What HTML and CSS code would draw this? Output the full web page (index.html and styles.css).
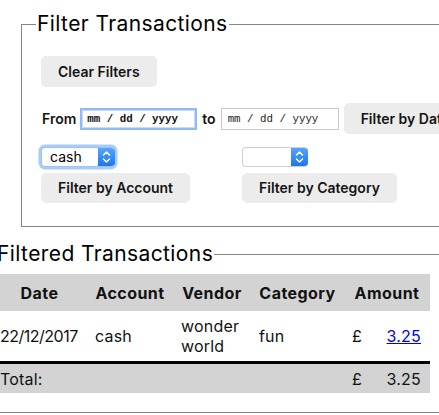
FILE: index.html
```html
<!DOCTYPE html>
<html>
<head>
<meta charset="utf-8">
<title>Transactions</title>
<link rel="stylesheet" href="styles.css">
</head>
<body>
<fieldset class="panel filters">
  <legend class="panel-title">Filter Transactions</legend>
  <div class="row">
    <button class="btn">Clear Filters</button>
  </div>
  <div class="row date-row">
    <span class="label">From</span>
    <input class="date date-focused" type="text" value="mm / dd / yyyy" readonly>
    <span class="label">to</span>
    <input class="date" type="text" value="mm / dd / yyyy" readonly>
    <button class="btn">Filter by Date</button>
  </div>
  <div class="select-grid">
    <div class="select-col">
      <div class="select select-focused">
        <span class="select-value">cash</span>
        <span class="select-arrow"><svg width="17" height="20" viewBox="0 0 17 20"><path d="M5.5 8 L8.5 5 L11.5 8" fill="none" stroke="#fff" stroke-width="1.5" stroke-linecap="round" stroke-linejoin="round"/><path d="M5.5 12 L8.5 15 L11.5 12" fill="none" stroke="#fff" stroke-width="1.5" stroke-linecap="round" stroke-linejoin="round"/></svg></span>
      </div>
      <button class="btn btn-short">Filter by Account</button>
    </div>
    <div class="select-col">
      <div class="select select-empty">
        <span class="select-value"></span>
        <span class="select-arrow"><svg width="17" height="20" viewBox="0 0 17 20"><path d="M5.5 8 L8.5 5 L11.5 8" fill="none" stroke="#fff" stroke-width="1.5" stroke-linecap="round" stroke-linejoin="round"/><path d="M5.5 12 L8.5 15 L11.5 12" fill="none" stroke="#fff" stroke-width="1.5" stroke-linecap="round" stroke-linejoin="round"/></svg></span>
      </div>
      <button class="btn btn-short">Filter by Category</button>
    </div>
  </div>
</fieldset>

<fieldset class="panel results">
  <legend class="panel-title">Filtered Transactions</legend>
  <table class="tx">
    <colgroup>
      <col class="c-date"><col class="c-acc"><col class="c-ven"><col class="c-cat"><col class="c-cur"><col class="c-amt">
    </colgroup>
    <thead>
      <tr><th>Date</th><th>Account</th><th>Vendor</th><th>Category</th><th colspan="2">Amount</th></tr>
    </thead>
    <tbody>
      <tr><td class="num-date">22/12/2017</td><td>cash</td><td>wonder world</td><td>fun</td><td>£</td><td class="amt"><a href="#">3.25</a></td></tr>
    </tbody>
    <tfoot>
      <tr><td colspan="4">Total:</td><td>£</td><td class="amt">3.25</td></tr>
    </tfoot>
  </table>
</fieldset>
</body>
</html>
```
FILE: styles.css
```css
html, body {
  margin: 0;
  padding: 0;
  background: #fff;
  overflow: hidden;
}
body {
  font-family: Inter, "Noto Sans", sans-serif;
  color: #111;
  width: 439px;
  height: 415px;
}
.panel {
  border: 1px solid #858585;
  width: 560px;
  min-width: 0;
  box-sizing: border-box;
}
.panel-title {
  font-size: 21px;
  line-height: 24px;
  letter-spacing: 0.4px;
  font-weight: 400;
  padding: 0 1px;
  color: #000;
}
.filters {
  margin: 12px 0 0 21px;
  padding: 20px 0 23px 19px;
}
.filters .panel-title {
  margin-left: -5px;
}
.row {
  display: flex;
  align-items: center;
}
.date-row {
  margin-top: 16px;
}
.btn {
  font-family: Inter, "Noto Sans", sans-serif;
  font-size: 14px;
  font-weight: 600;
  letter-spacing: 0;
  line-height: 17px;
  color: #141414;
  background: #ececec;
  border: none;
  border-radius: 5px;
  padding: 7px 17px;
  margin: 0;
  white-space: nowrap;
}
.btn-short {
  padding: 6px 17px 7px;
}
.label {
  font-size: 14px;
  font-weight: 600;
  letter-spacing: 0;
  color: #141414;
}
.date-row .label:first-child {
  margin-left: 1px;
  margin-right: 4px;
}
.date-row .label:nth-of-type(2) {
  margin: 0 5px 0 5px;
}
.date {
  font-family: "Liberation Mono", monospace;
  font-size: 10.8px;
  color: #222;
  width: 118px;
  height: 22px;
  box-sizing: border-box;
  border: 1px solid #c9c9c9;
  padding: 0 0 0 6px;
  margin: 0;
  background: #fff;
  outline: none;
}
.date-focused {
  width: 117px;
  font-weight: 700;
  color: #111;
  border: 2px solid #8fbaf3;
  padding-left: 5px;
  box-shadow: inset 0 0 0 1px #c9dcf8;
}
.date-row .btn {
  margin-left: 5px;
}
.select-grid {
  display: grid;
  grid-template-columns: 201px auto;
  margin-top: 13px;
}
.select-col {
  display: flex;
  flex-direction: column;
  align-items: flex-start;
  gap: 6px;
}
.select {
  display: flex;
  height: 20px;
  box-sizing: border-box;
  border-radius: 4px;
  background: #fff;
  border: 1px solid #cfcfcf;
  border-right: none;
  overflow: hidden;
}
.select-focused {
  width: 74px;
  border-color: #9cc3f5;
  box-shadow: 0 0 0 2.5px #a9cbf8;
}
.select-empty {
  width: 66px;
}
.select-value {
  flex: 1;
  font-size: 14px;
  line-height: 18px;
  padding-left: 8px;
  color: #000;
}
.select-arrow {
  width: 17px;
  height: 20px;
  margin-top: -1px;
  background: linear-gradient(#5aa7fb, #1a73ec);
  display: block;
}
.select-arrow svg {
  display: block;
}
.results {
  margin: 15px 0 0 -17px;
  padding: 8px 0 19px 8px;
}
.results .panel-title {
  margin-left: 4px;
}
.tx {
  table-layout: fixed;
  width: 438px;
  border-collapse: separate;
  border-spacing: 0;
  font-size: 16px;
  line-height: 20px;
  letter-spacing: 0.2px;
}
.c-date { width: 95px; }
.c-acc { width: 86px; }
.c-ven { width: 78px; }
.c-cat { width: 93px; }
.c-cur { width: 24px; }
.c-amt { width: 62px; }
.tx th {
  background: #d3d3d3;
  font-weight: 700;
  letter-spacing: 0.45px;
  text-align: center;
  padding: 9px 8px 8px;
  white-space: nowrap;
}
.tx td {
  padding: 5px 8px;
  vertical-align: middle;
  text-align: left;
}
.tx .num-date {
  letter-spacing: -0.5px;
}
.tx td.amt {
  text-align: right;
  padding-right: 9px;
}
.tx a {
  color: #0000ee;
  text-decoration: underline;
}
.tx tfoot td {
  background: #d3d3d3;
  border-top: 3px solid #000;
  padding: 5px 8px 4px;
}
.tx tfoot td.amt {
  padding-right: 9px;
}
```
